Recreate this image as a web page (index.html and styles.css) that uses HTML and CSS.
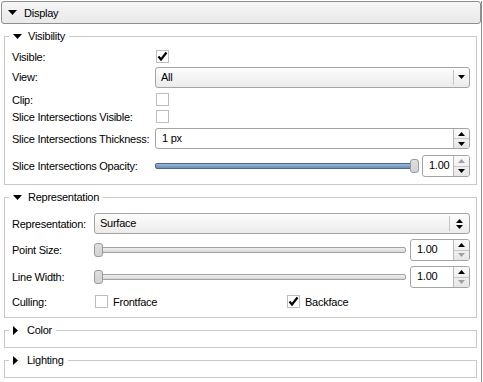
FILE: index.html
```html
<!DOCTYPE html>
<html lang="en">
<head>
    <meta charset="UTF-8">
    <meta name="viewport" content="width=device-width, initial-scale=1.0">
    <title>Display Properties</title>
    <link rel="stylesheet" href="styles.css">
</head>
<body>
    <div class="panel">
        <div class="section-head">
            <svg class="tri" width="9" height="5" viewBox="0 0 9 5"><path d="M0 0H9L4.5 5Z"/></svg>
            <span>Display</span>
        </div>

        <fieldset class="group">
            <legend><svg class="tri" width="9" height="5" viewBox="0 0 9 5"><path d="M0 0H9L4.5 5Z"/></svg>Visibility</legend>
            <div class="form form-visibility">
                <label>Visible:</label>
                <span class="check"><svg width="11" height="11" viewBox="0 0 11 11"><path d="M1.5 5.5L4 8.5L9.5 1.5" fill="none" stroke="#000" stroke-width="2.2"/></svg></span>

                <label>View:</label>
                <div class="combo">
                    <span class="combo-text">All</span>
                    <span class="combo-btn"><svg width="7" height="4" viewBox="0 0 7 4"><path d="M0 0H7L3.5 4Z"/></svg></span>
                </div>

                <label>Clip:</label>
                <span class="check"></span>

                <label>Slice Intersections Visible:</label>
                <span class="check"></span>

                <label>Slice Intersections Thickness:</label>
                <div class="spin">
                    <span class="spin-text">1 px</span>
                    <span class="spin-btns">
                        <span class="spin-up"><svg width="7" height="4" viewBox="0 0 7 4"><path d="M0 4H7L3.5 0Z"/></svg></span>
                        <span class="spin-down"><svg width="7" height="4" viewBox="0 0 7 4"><path d="M0 0H7L3.5 4Z"/></svg></span>
                    </span>
                </div>

                <label>Slice Intersections Opacity:</label>
                <div class="slider-row">
                    <div class="slider slider-full"><span class="handle"></span></div>
                    <div class="spin spin-small">
                        <span class="spin-text">1.00</span>
                        <span class="spin-btns">
                            <span class="spin-up off"><svg width="7" height="4" viewBox="0 0 7 4"><path d="M0 4H7L3.5 0Z"/></svg></span>
                            <span class="spin-down"><svg width="7" height="4" viewBox="0 0 7 4"><path d="M0 0H7L3.5 4Z"/></svg></span>
                        </span>
                    </div>
                </div>
            </div>
        </fieldset>

        <fieldset class="group">
            <legend><svg class="tri" width="9" height="5" viewBox="0 0 9 5"><path d="M0 0H9L4.5 5Z"/></svg>Representation</legend>
            <div class="form form-representation">
                <label>Representation:</label>
                <div class="combo">
                    <span class="combo-text">Surface</span>
                    <span class="combo-btn combo-btn-wide"><svg width="7" height="10" viewBox="0 0 7 10"><path d="M0 4H7L3.5 0Z M0 6H7L3.5 10Z"/></svg></span>
                </div>

                <label>Point Size:</label>
                <div class="slider-row">
                    <div class="slider"><span class="handle handle-start"></span></div>
                    <div class="spin spin-wide">
                        <span class="spin-text">1.00</span>
                        <span class="spin-btns">
                            <span class="spin-up"><svg width="7" height="4" viewBox="0 0 7 4"><path d="M0 4H7L3.5 0Z"/></svg></span>
                            <span class="spin-down off"><svg width="7" height="4" viewBox="0 0 7 4"><path d="M0 0H7L3.5 4Z"/></svg></span>
                        </span>
                    </div>
                </div>

                <label>Line Width:</label>
                <div class="slider-row">
                    <div class="slider"><span class="handle handle-start"></span></div>
                    <div class="spin spin-wide">
                        <span class="spin-text">1.00</span>
                        <span class="spin-btns">
                            <span class="spin-up"><svg width="7" height="4" viewBox="0 0 7 4"><path d="M0 4H7L3.5 0Z"/></svg></span>
                            <span class="spin-down off"><svg width="7" height="4" viewBox="0 0 7 4"><path d="M0 0H7L3.5 4Z"/></svg></span>
                        </span>
                    </div>
                </div>

                <label>Culling:</label>
                <div class="culling">
                    <span class="check-item"><span class="check"></span>Frontface</span>
                    <span class="check-item"><span class="check"><svg width="11" height="11" viewBox="0 0 11 11"><path d="M1.5 5.5L4 8.5L9.5 1.5" fill="none" stroke="#000" stroke-width="2.2"/></svg></span>Backface</span>
                </div>
            </div>
        </fieldset>

        <fieldset class="group group-closed">
            <legend><svg class="tri" width="5" height="9" viewBox="0 0 5 9"><path d="M0 0V9L5 4.5Z"/></svg>Color</legend>
        </fieldset>

        <fieldset class="group group-closed">
            <legend><svg class="tri" width="5" height="9" viewBox="0 0 5 9"><path d="M0 0V9L5 4.5Z"/></svg>Lighting</legend>
        </fieldset>
    </div>
</body>
</html>
```

FILE: styles.css
```css
body {
    margin: 0;
    font-family: "Liberation Sans", Arial, sans-serif;
    font-size: 11px;
    letter-spacing: -0.25px;
    color: #000;
    background-color: #fff;
}
.panel {
    width: 481px;
    height: 381px;
    border-right: 1px solid #8c8c8c;
}
.section-head {
    display: flex;
    align-items: center;
    gap: 7px;
    height: 21px;
    margin: 1px 0 0 1px;
    padding-left: 6px;
    border: 1px solid #8e8e8e;
    border-radius: 3px;
    background: linear-gradient(#f6f6f6, #e9e9e9);
}
.tri {
    display: block;
    flex: none;
}
.group {
    margin: 5px 4px 0 4px;
    padding: 0 6px 6px 7px;
    border: 1px solid #c9c9c9;
    box-shadow: inset 1px 1px 0 #fff;
}
.group legend {
    display: flex;
    align-items: center;
    gap: 6px;
    height: 14px;
    margin-left: -3px;
    padding: 0 4px;
}
.group-closed {
    padding-bottom: 10px;
}
.group-closed legend {
    gap: 9px;
}
.form {
    display: grid;
    align-items: center;
}
.form label {
    white-space: nowrap;
}
.form-visibility {
    grid-template-columns: 143px minmax(0, 1fr);
    grid-template-rows: 17px 24px 21px 13px 31px 24px;
    padding-top: 5px;
}
.form-representation {
    grid-template-columns: 82px minmax(0, 1fr);
    grid-template-rows: 29px 24px 30px 19px;
    padding-top: 5px;
}
.check {
    display: flex;
    align-items: center;
    justify-content: center;
    width: 11px;
    height: 11px;
    margin-left: 1px;
    border: 1px solid #bdbdbd;
    background-color: #fff;
}
.check svg {
    display: block;
}
.combo {
    display: flex;
    height: 19px;
    border: 1px solid #a4a4a4;
    border-radius: 3px;
    background: linear-gradient(#fdfdfd, #ebebeb);
}
.combo-text {
    flex: 1;
    padding-left: 5px;
    line-height: 19px;
}
.combo-btn {
    display: flex;
    align-items: center;
    justify-content: center;
    width: 15px;
    margin: 2px 0;
    border-left: 1px solid #c4c4c4;
}
.combo-btn-wide {
    width: 19px;
}
.spin {
    display: flex;
    height: 19px;
    border: 1px solid #a4a4a4;
    border-radius: 3px;
    background-color: #fff;
}
.spin-text {
    flex: 1;
    padding-left: 6px;
    line-height: 19px;
}
.spin-btns {
    display: flex;
    flex-direction: column;
    width: 15px;
    border-left: 1px solid #b8b8b8;
    border-radius: 0 2px 2px 0;
    background: linear-gradient(#fafafa, #e6e6e6);
}
.spin-btns span {
    flex: 1;
    display: flex;
    align-items: center;
    justify-content: center;
}
.spin-up {
    border-bottom: 1px solid #c8c8c8;
}
.spin-btns .off svg {
    fill: #a0a0a0;
}
.spin-small {
    flex: none;
    width: 46px;
    height: 20px;
}
.spin-wide {
    flex: none;
    width: 58px;
    height: 20px;
}
.slider-row {
    display: flex;
    align-items: center;
    gap: 4px;
}
.slider {
    flex: 1;
    display: flex;
    align-items: center;
    height: 4px;
    border: 1px solid #a2a2a2;
    border-radius: 2px;
    background: linear-gradient(#f0f0f0, #d8d8d8);
}
.slider-full {
    justify-content: flex-end;
    border-color: #4b6487;
    background: linear-gradient(#9ab8dc, #6a8cb8);
}
.handle {
    flex: none;
    width: 7px;
    height: 12px;
    margin-right: -2px;
    border: 1px solid #9a9a9a;
    border-radius: 3px;
    background:
        radial-gradient(circle, #c4c4c4 0.6px, transparent 0.8px) 0 0 / 2px 2px,
        linear-gradient(#f6f6f6, #dedede);
}
.handle-start {
    margin-left: -1px;
    margin-right: 0;
}
.culling {
    display: grid;
    grid-template-columns: 192px 1fr;
}
.check-item {
    display: flex;
    align-items: center;
    gap: 5px;
}
```
